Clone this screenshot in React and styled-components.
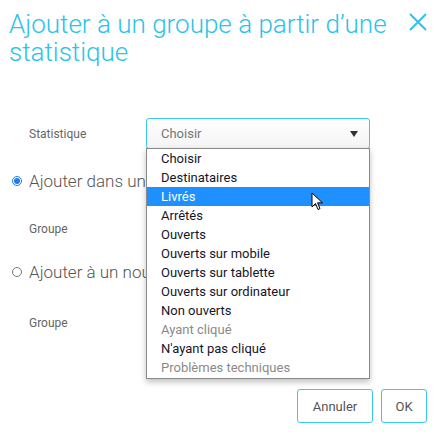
import { createGlobalStyle, styled } from 'styled-components';

const GlobalStyle = createGlobalStyle`
  body {
    margin: 0;
    background: #fff;
    font-family: Roboto, 'Liberation Sans', sans-serif;
  }
`;

const Dialog = styled.div`
  width: 436px;
  height: 432px;
  box-sizing: border-box;
  padding: 0 9px;
  display: flex;
  flex-direction: column;
`;

const Header = styled.div`
  display: flex;
  justify-content: space-between;
  align-items: flex-start;
`;

const Title = styled.h1`
  margin: 0;
  padding-top: 10px;
  font-size: 26px;
  line-height: 28px;
  font-weight: 300;
  color: #2bc3e9;
`;

const Close = styled.button`
  border: 0;
  background: none;
  padding: 0;
  margin-top: 13px;
  display: flex;
  cursor: pointer;
`;

const Form = styled.div`
  display: flex;
  flex-direction: column;
`;

const Field = styled.div`
  display: grid;
  grid-template-columns: 117px 224px;
  align-items: center;
  padding-left: 20px;
  margin-top: ${(p) => p.$mt}px;
  position: relative;
`;

const Label = styled.span`
  font-size: 12px;
  color: #666;
`;

const Select = styled.div`
  height: 31px;
  box-sizing: border-box;
  border: 1px solid ${(p) => (p.$active ? '#3cc6ea' : '#ccc')};
  border-radius: 3px;
  background: linear-gradient(#fff, #f4f4f4);
  display: flex;
  align-items: center;
  justify-content: space-between;
  padding: 0 11px 0 14px;
  font-size: 13px;
  color: #777;
`;

const Caret = styled.span`
  width: 0;
  height: 0;
  border-left: 4px solid transparent;
  border-right: 4px solid transparent;
  border-top: 6px solid #333;
`;

const Dropdown = styled.ul`
  position: absolute;
  top: 30px;
  left: 137px;
  width: 224px;
  box-sizing: border-box;
  margin: 0;
  padding: 0 0 1px;
  list-style: none;
  background: #fff;
  border: 1px solid #8a8a8a;
  box-shadow: 0 3px 6px rgba(0, 0, 0, 0.25);
  z-index: 2;
`;

const Option = styled.li`
  position: relative;
  height: 19px;
  line-height: 19px;
  padding-left: 14px;
  font-size: 13px;
  color: ${(p) => (p.$selected ? '#fff' : p.$disabled ? '#8a8a8a' : '#14162c')};
  background: ${(p) => (p.$selected ? '#1e90ff' : 'transparent')};
`;

const Pointer = styled.svg`
  position: absolute;
  left: 164px;
  top: 5px;
`;

const RadioRow = styled.label`
  display: flex;
  align-items: center;
  gap: 7px;
  height: 20px;
  width: 134px;
  overflow: hidden;
  padding-left: 3px;
  margin-top: ${(p) => p.$mt}px;
  font-size: 17px;
  font-weight: 300;
  color: #555;
  white-space: nowrap;
`;

const Radio = styled.span`
  flex: none;
  width: 10px;
  height: 10px;
  box-sizing: border-box;
  border-radius: 50%;
  border: 1px solid ${(p) => (p.$checked ? '#1e7cf0' : '#777')};
  display: flex;
  align-items: center;
  justify-content: center;
  &::after {
    content: '';
    width: 6px;
    height: 6px;
    border-radius: 50%;
    background: ${(p) => (p.$checked ? '#1e7cf0' : 'transparent')};
  }
`;

const Footer = styled.div`
  display: flex;
  justify-content: flex-end;
  gap: 8px;
  margin-top: 51px;
`;

const Button = styled.button`
  height: 34px;
  width: ${(p) => p.$w}px;
  border: 1px solid #3cc6ea;
  border-radius: 3px;
  background: #fff;
  font-family: Roboto, 'Liberation Sans', sans-serif;
  font-size: 13px;
  color: #555;
  cursor: pointer;
`;

const options = [
  { name: 'Choisir' },
  { name: 'Destinataires' },
  { name: 'Livrés', selected: true },
  { name: 'Arrêtés' },
  { name: 'Ouverts' },
  { name: 'Ouverts sur mobile' },
  { name: 'Ouverts sur tablette' },
  { name: 'Ouverts sur ordinateur' },
  { name: 'Non ouverts' },
  { name: 'Ayant cliqué', disabled: true },
  { name: "N'ayant pas cliqué" },
  { name: 'Problèmes techniques', disabled: true },
];

const App = () => {
  return (
    <Dialog>
      <GlobalStyle />
      <Header>
        <Title>
          Ajouter à un groupe à partir d’une
          <br />
          statistique
        </Title>
        <Close aria-label="Fermer">
          <svg width="18" height="18" viewBox="0 0 18 18">
            <path d="M1 1L17 17M17 1L1 17" stroke="#2bc3e9" strokeWidth="2" />
          </svg>
        </Close>
      </Header>

      <Form>
        <Field $mt={52}>
          <Label>Statistique</Label>
          <Select $active>
            Choisir
            <Caret />
          </Select>
          <Dropdown>
            {options.map((o) => (
              <Option key={o.name} $selected={o.selected} $disabled={o.disabled}>
                {o.name}
                {o.selected && (
                  <Pointer width="13" height="19" viewBox="0 0 13 19">
                    <path
                      d="M1 1L1 15L4.5 11.5L7 17.5L9 16.6L6.6 10.8L11.5 10.8Z"
                      fill="#fff"
                      stroke="#000"
                      strokeWidth="1"
                      strokeLinejoin="round"
                    />
                  </Pointer>
                )}
              </Option>
            ))}
          </Dropdown>
        </Field>

        <RadioRow $mt={22}>
          <Radio $checked />
          Ajouter dans un groupe existant
        </RadioRow>

        <Field $mt={22}>
          <Label>Groupe</Label>
          <Select />
        </Field>

        <RadioRow $mt={18}>
          <Radio />
          Ajouter à un nouveau groupe
        </RadioRow>

        <Field $mt={25}>
          <Label>Groupe</Label>
          <Select />
        </Field>
      </Form>

      <Footer>
        <Button $w={76}>Annuler</Button>
        <Button $w={46}>OK</Button>
      </Footer>
    </Dialog>
  );
};

export default App;
